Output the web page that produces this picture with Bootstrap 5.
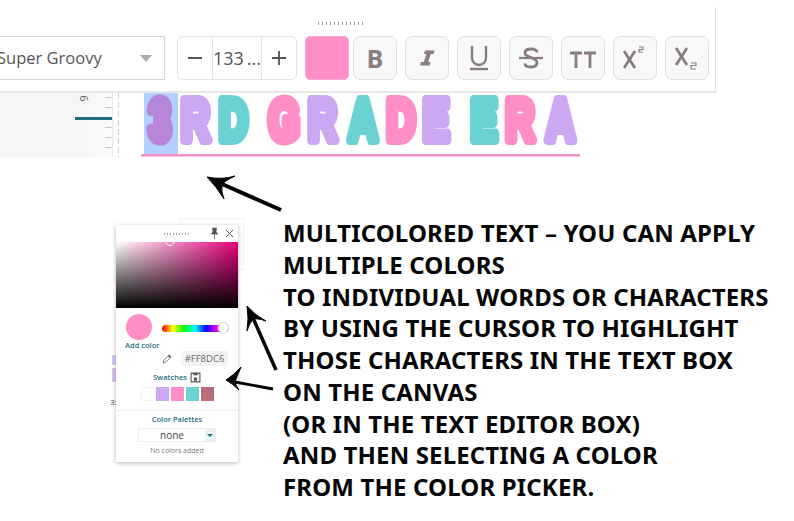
<!DOCTYPE html>
<html lang="en"><head><meta charset="utf-8"><title>Multicolored text</title>
<link href="https://cdn.jsdelivr.net/npm/bootstrap@5.3.0/dist/css/bootstrap.min.css" rel="stylesheet">
<style>
html,body{margin:0;background:#fff}
body{font-family:"Open Sans","Noto Sans",sans-serif;color:#555}
.shot{position:relative;width:794px;height:521px;overflow:hidden}
.tbar{width:716px;height:86px;margin-top:7px;padding-top:29px;padding-right:7px;gap:8px;border-right:1px solid #ddd;border-bottom:2px solid #e9e7e8;position:relative}
.grip{position:absolute;left:318px;top:15px;width:48px;height:3px;background:repeating-linear-gradient(90deg,#999 0 1px,transparent 1px 4px)}
.fontsel{width:172px;height:44px;margin-left:-7px;margin-right:4px;border:1px solid #d4d4d4;padding:0 12px 0 3px;font-size:16.5px;color:#555}
.fontsel i{width:0;height:0;border-left:6.5px solid transparent;border-right:6.5px solid transparent;border-top:7px solid #aaa}
.stepper{width:120px;height:44px;border:1px solid #e2e2e2;border-radius:6px;font-size:18px;color:#555}
.stepper>div{height:100%}
.stepcell{width:35px}
.stepnum{width:50px;border-left:1px solid #e2e2e2;border-right:1px solid #e2e2e2;white-space:nowrap}
.colorbtn{width:44px;height:44px;border-radius:5px;background:#ff8dc6;border:1px solid #f7a8d0}
.fmtbtn{width:44px;height:44px;border:1px solid #e0e0e0;border-radius:7px;background:#f8f8f8;color:#8a7d80;padding:0;font-size:25px;font-weight:700;line-height:1;--bs-btn-hover-bg:#f8f8f8}
.fmtbtn svg{display:block}
.strip{height:64px}
.paper{width:75px;background:#f6f6f8}
.ruler{width:38px;background:linear-gradient(90deg,#f5f5f6,#fbfbfb);position:relative;border-right:1px solid #e8e8e8;overflow:hidden}
.ruler b{position:absolute;left:6px;top:0;font-size:11px;font-weight:400;transform:rotate(90deg);color:#666;line-height:1}
.rmark{position:absolute;left:0;right:0;top:24px;height:3px;background:#1f6f80}
.rticks{position:absolute;right:0;top:4px;width:7px;height:60px;background:repeating-linear-gradient(180deg,#c9c9c9 0 1px,transparent 1px 10px)}
.dash{width:1px;margin-left:5px;background:repeating-linear-gradient(180deg,#ccc 0 6px,transparent 6px 9px)}
.art{width:470px;margin-left:20px;position:relative}
.art svg{display:block}
.lower{padding-top:68px}
.panel{width:122px;height:237px;margin-left:116px;background:#fff;box-shadow:0 1px 4px rgba(0,0,0,.3);position:relative;z-index:1;text-align:center;color:#1f6f80}
.phead{height:17px;position:relative}
.grip2{position:absolute;left:48px;top:8px;width:27px;height:2px;background:repeating-linear-gradient(90deg,#aaa 0 1px,transparent 1px 3px)}
.phead svg{position:absolute;top:2px}
.sv{height:66px;position:relative;background:linear-gradient(0deg,#000,rgba(0,0,0,0)),linear-gradient(90deg,#fff,#e6007e)}
.svknob{position:absolute;left:49px;top:-6px;width:10px;height:10px;border:1px solid #fff;border-radius:50%;box-shadow:0 0 1px #777}
.pickrow{height:43px;position:relative}
.bigdot{position:absolute;left:10px;top:6px;width:26px;height:26px;border-radius:50%;background:#ff8dc6}
.addc{position:absolute;left:9px;top:32px;font-size:7.5px;font-weight:600;white-space:nowrap}
.hue{position:absolute;left:46px;top:17px;width:66px;height:7px;border-radius:4px;background:linear-gradient(90deg,#f00,#ff0,#0f0,#0ff,#00f,#f0f,#f00)}
.huek{position:absolute;right:0;top:-2px;width:10px;height:10px;border-radius:50%;background:#fff;box-shadow:0 0 2px #888}
.hexrow{height:15px;gap:9px;padding-right:10px}
.hexv{width:47px;height:15px;background:#f3f3f3;color:#666;font-size:9.5px;line-height:15px}
.swtitle{font-size:7.5px;font-weight:600;margin-top:4px;height:14px;line-height:14px;gap:3px}
.swrow{gap:2px;margin-top:3px}
.swrow span{width:13px;height:14px;display:block}
.pdiv{border-top:1px solid #eee;margin:9px 0 0}
.pltitle{font-size:7.5px;font-weight:600;margin-top:2px;line-height:12px}
.nonesel{width:78px;height:14px;margin:3px auto 0;border:1px solid #eee;font-size:10px;color:#444;line-height:12px}
.nonesel span{flex:1}
.nonesel i{width:10px;background:#e8f3f5;display:flex;align-items:center;justify-content:center}
.nonesel i:after{content:"";border-left:3px solid transparent;border-right:3px solid transparent;border-top:3.5px solid #1f6f80}
.nocol{font-size:7px;color:#777;margin-top:4px}
.behind{position:absolute;left:112px;top:355px;width:4px;height:10px;background:#d6c0f2}
.behind1{position:absolute;left:112px;top:368px;width:4px;height:14px;background:#d6c0f2}
.behind2{position:absolute;left:110px;top:397px;font-size:8px;color:#444;line-height:10px}
.behind3{position:absolute;left:180px;top:218px;width:64px;height:52px;border:1px solid #f1f1f1}
.note{margin-left:45px;margin-top:-8px;font-family:"Noto Sans","Open Sans",sans-serif;font-weight:700;font-size:24px;line-height:31.75px;color:#050505;letter-spacing:.15px;white-space:nowrap}
.arrows{position:absolute;left:0;top:0;pointer-events:none;z-index:2}
</style></head><body>
<div class="shot">
 <div class="tbar d-flex align-items-start">
  <div class="grip"></div>
  <div class="fontsel d-flex align-items-center justify-content-between flex-shrink-0"><span>Super Groovy</span><i></i></div>
  <div class="stepper d-flex align-items-center flex-shrink-0">
   <div class="stepcell d-flex align-items-center justify-content-center"><svg width="16" height="16" viewBox="0 0 16 16"><path d="M1 8h14" stroke="#555" stroke-width="2"/></svg></div>
   <div class="stepnum d-flex align-items-center justify-content-center">133&#8201;...</div>
   <div class="stepcell d-flex align-items-center justify-content-center"><svg width="16" height="16" viewBox="0 0 16 16"><path d="M1 8h14M8 1v14" stroke="#555" stroke-width="1.800"/></svg></div>
  </div>
  <div class="colorbtn flex-shrink-0"></div>
  <button class="btn fmtbtn flex-shrink-0" style="margin-left:-4px" type="button">B</button>
  <button class="btn fmtbtn flex-shrink-0 d-flex align-items-center justify-content-center" type="button"><svg width="20" height="20" viewBox="0 0 20 20"><path d="M8 2.500h9.500l-1 3.500h-2.800l-2.500 8h2.300l-1 3.500H3l1-3.500h2.800l2.500-8H7z" fill="#8a7d80"/></svg></button>
  <button class="btn fmtbtn flex-shrink-0 d-flex align-items-center justify-content-center" type="button"><svg width="22" height="28" viewBox="0 0 22 28"><path d="M4 2v12a7 7 0 0 0 14 0V2" fill="none" stroke="#8a7d80" stroke-width="2.400"/><path d="M2 25h18" stroke="#8a7d80" stroke-width="2.400"/></svg></button>
  <button class="btn fmtbtn flex-shrink-0 d-flex align-items-center justify-content-center" type="button"><svg width="26" height="24" viewBox="0 0 26 24"><path d="M19 6.500C19 4 16 3 13 3S7 4 7 7c0 5 12 4 12 9.500C19 20 16 21 13 21s-6-1-6-3.500" fill="none" stroke="#8a7d80" stroke-width="2.800"/><path d="M1 12h24" stroke="#8a7d80" stroke-width="2.200"/></svg></button>
  <button class="btn fmtbtn flex-shrink-0 d-flex align-items-center justify-content-center" type="button"><svg width="28" height="24" viewBox="0 0 28 24"><path d="M1 7h12M7 7v15M15 7h12M21 7v15" fill="none" stroke="#8a7d80" stroke-width="2.800"/></svg></button>
  <button class="btn fmtbtn flex-shrink-0 d-flex align-items-center justify-content-center" type="button"><svg width="24" height="26" viewBox="0 0 24 26"><path d="M1 6l11 17M12 6L1 23" stroke="#8a7d80" stroke-width="2.800"/><path d="M16 2h4v2.500h-4V7h4" fill="none" stroke="#8a7d80" stroke-width="1.200"/></svg></button>
  <button class="btn fmtbtn flex-shrink-0 d-flex align-items-center justify-content-center" type="button"><svg width="24" height="26" viewBox="0 0 24 26"><path d="M1 3l11 17M12 3L1 20" stroke="#8a7d80" stroke-width="2.800"/><path d="M16 18h5v2.500h-5V24h5" fill="none" stroke="#8a7d80" stroke-width="1.200"/></svg></button>
 </div>
 <div class="strip d-flex">
  <div class="paper"></div>
  <div class="ruler"><b>6</b><div class="rticks"></div><div class="rmark"></div></div>
  <div class="dash"></div>
  <div class="art">
   <svg width="470" height="64" viewBox="0 0 470 64" role="img" aria-label="3RD GRADE ERA">
    <rect x="5" y="0" width="34" height="62" fill="#b3d1ff"/>
    <rect x="2" y="61" width="439" height="2.500" fill="#f58fc4"/>
    <g transform="scale(1 1.45)" font-family="Liberation Sans" font-weight="700" font-size="40" stroke-width="7" stroke-linejoin="round" text-anchor="middle">
     <text x="21" y="32.300" fill="#b886d6" stroke="#b886d6">3</text>
     <text x="56.500" y="32.300" fill="#cba8f2" stroke="#cba8f2">R</text>
     <text x="94.500" y="32.300" fill="#6ad2d2" stroke="#6ad2d2">D</text>
     <text x="145" y="32.300" fill="#ff8dc6" stroke="#ff8dc6">G</text>
     <text x="183.500" y="32.300" fill="#cba8f2" stroke="#cba8f2">R</text>
     <text x="224" y="32.300" fill="#6ad2d2" stroke="#6ad2d2">A</text>
     <text x="262" y="32.300" fill="#ff8dc6" stroke="#ff8dc6">D</text>
     <text x="297" y="32.300" fill="#cba8f2" stroke="#cba8f2">E</text>
     <text x="345" y="32.300" fill="#6ad2d2" stroke="#6ad2d2">E</text>
     <text x="381" y="32.300" fill="#ff8dc6" stroke="#ff8dc6">R</text>
     <text x="421.500" y="32.300" fill="#cba8f2" stroke="#cba8f2">A</text>
    </g>
   </svg>
  </div>
 </div>
 <div class="behind"></div><div class="behind1"></div><div class="behind2">3:</div><div class="behind3"></div>
 <div class="lower d-flex align-items-start">
  <div class="panel flex-shrink-0">
   <div class="phead"><div class="grip2"></div>
    <svg style="left:94px" width="9" height="12" viewBox="0 0 9 12"><path d="M2.500 1h4L6 5l2 2H1l2-2zM4.500 7v5" fill="#555" stroke="#555" stroke-width=".7"/></svg>
    <svg style="left:109px;top:4px" width="9" height="9" viewBox="0 0 9 9"><path d="M1 1l7 7M8 1L1 8" stroke="#555" stroke-width="1"/></svg>
   </div>
   <div class="sv"><div class="svknob"></div></div>
   <div class="pickrow"><div class="bigdot"></div><div class="addc">Add color</div><div class="hue"><div class="huek"></div></div></div>
   <div class="hexrow d-flex justify-content-end align-items-center">
    <svg width="10" height="10" viewBox="0 0 10 10"><path d="M1 9l1-3 4-4 2 2-4 4z" fill="none" stroke="#666" stroke-width=".8"/><path d="M6 1.500l1-1 2.500 2.500-1 1z" fill="#555"/></svg>
    <div class="hexv">#FF8DC6</div>
   </div>
   <div class="swtitle d-flex justify-content-center align-items-center">Swatches
    <svg width="11" height="11" viewBox="0 0 10 10"><path d="M1 1h8v8H1z" fill="none" stroke="#555"/><path d="M3 1h4v2H3zM3.500 5h3v3h-3z" fill="#555"/></svg>
   </div>
   <div class="swrow d-flex justify-content-center">
    <span style="background:#fff;border:1px solid #f3f3f3"></span><span style="background:#cba8f2"></span><span style="background:#ff8dc6"></span><span style="background:#6ad2d2"></span><span style="background:#b56e7c"></span>
   </div>
   <div class="pdiv"></div>
   <div class="pltitle">Color Palettes</div>
   <div class="nonesel d-flex"><span>none</span><i></i></div>
   <div class="nocol">No colors added</div>
  </div>
  <div class="note">MULTICOLORED TEXT – YOU CAN APPLY<br>MULTIPLE COLORS<br>TO INDIVIDUAL WORDS OR CHARACTERS<br>BY USING THE CURSOR TO HIGHLIGHT<br>THOSE CHARACTERS IN THE TEXT BOX<br>ON THE CANVAS<br>(OR IN THE TEXT EDITOR BOX)<br>AND THEN SELECTING A COLOR<br>FROM THE COLOR PICKER.</div>
 </div>
 <svg class="arrows" width="794" height="521" viewBox="0 0 794 521" aria-hidden="true">
  <g fill="#050505" stroke="#050505">
   <path d="M281 210L222 184" stroke-width="4" fill="none"/><path d="M207 177Q222 180 235 176Q224 181 222 185Q221 192 224 199Q216 186 207 177z" stroke-width="1"/>
   <path d="M276 370L253 318" stroke-width="3.500" fill="none"/><path d="M247 306Q256 316 266 321Q257 318 253 319Q249 324 247 331Q249 318 247 306z" stroke-width="1"/>
   <path d="M273 389L235 382" stroke-width="2.800" fill="none"/><path d="M226 380Q234 375 241 367Q237 376 235 382Q236 386 239 390Q233 384 226 380z" stroke-width="1"/>
  </g>
 </svg>
</div>
<script src="https://cdn.jsdelivr.net/npm/bootstrap@5.3.0/dist/js/bootstrap.bundle.min.js"></script>
</body></html>
